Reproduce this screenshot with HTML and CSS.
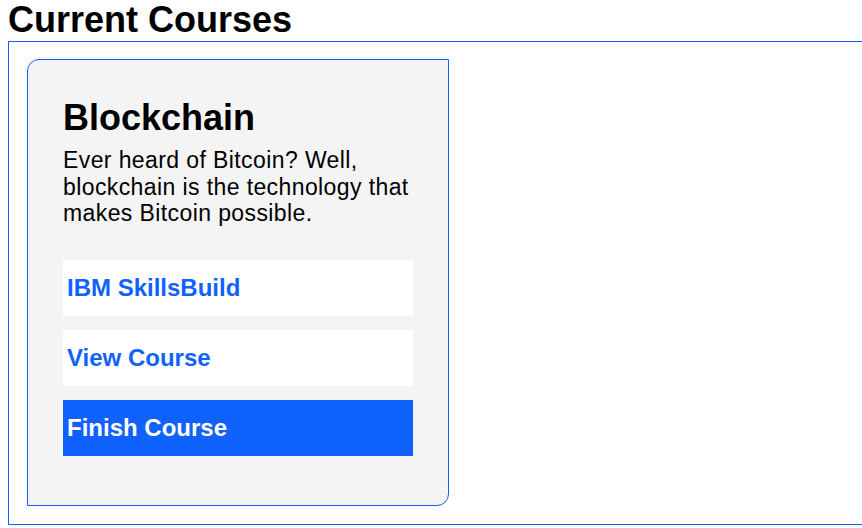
FILE: index.html
```html
<!DOCTYPE html>
<html lang="en">
<head>
<meta charset="utf-8">
<title>Current Courses</title>
<link rel="stylesheet" href="styles.css">
</head>
<body>
<h1 class="page-title">Current Courses</h1>
<section class="course-list">
  <article class="course-card">
    <h2 class="course-title">Blockchain</h2>
    <p class="course-desc">Ever heard of Bitcoin? Well, blockchain is the technology that makes Bitcoin possible.</p>
    <div class="course-actions">
      <a class="course-btn" href="#">IBM SkillsBuild</a>
      <a class="course-btn" href="#">View Course</a>
      <a class="course-btn course-btn-primary" href="#">Finish Course</a>
    </div>
  </article>
</section>
</body>
</html>
```
FILE: styles.css
```css
body {
  margin: 0 0 0 8px;
  font-family: "Liberation Sans", Arial, sans-serif;
  color: #000;
  background: #fff;
}
.page-title {
  margin: 0;
  padding-bottom: 1px;
  font-size: 36px;
  line-height: 40px;
  font-weight: bold;
}
.course-list {
  border: 1px solid #0f62fe;
  border-right: none;
  padding: 17px 18px 18px;
}
.course-card {
  width: 422px;
  box-sizing: border-box;
  background: #f4f4f4;
  border: 1px solid #0f62fe;
  border-radius: 12px 0 12px 0;
  padding: 37px 35px 49px;
}
.course-title {
  margin: 0;
  font-size: 36px;
  line-height: 41px;
  font-weight: bold;
}
.course-desc {
  margin: 9px 0 33px;
  font-size: 23px;
  letter-spacing: 0.4px;
  line-height: 26.7px;
}
.course-actions {
  display: flex;
  flex-direction: column;
  gap: 14px;
}
.course-btn {
  display: flex;
  align-items: center;
  height: 56px;
  padding: 0 4px;
  background: #fff;
  color: #0f62fe;
  font-size: 24px;
  font-weight: bold;
  text-decoration: none;
}
.course-btn-primary {
  background: #0f62fe;
  color: #fff;
}
```
